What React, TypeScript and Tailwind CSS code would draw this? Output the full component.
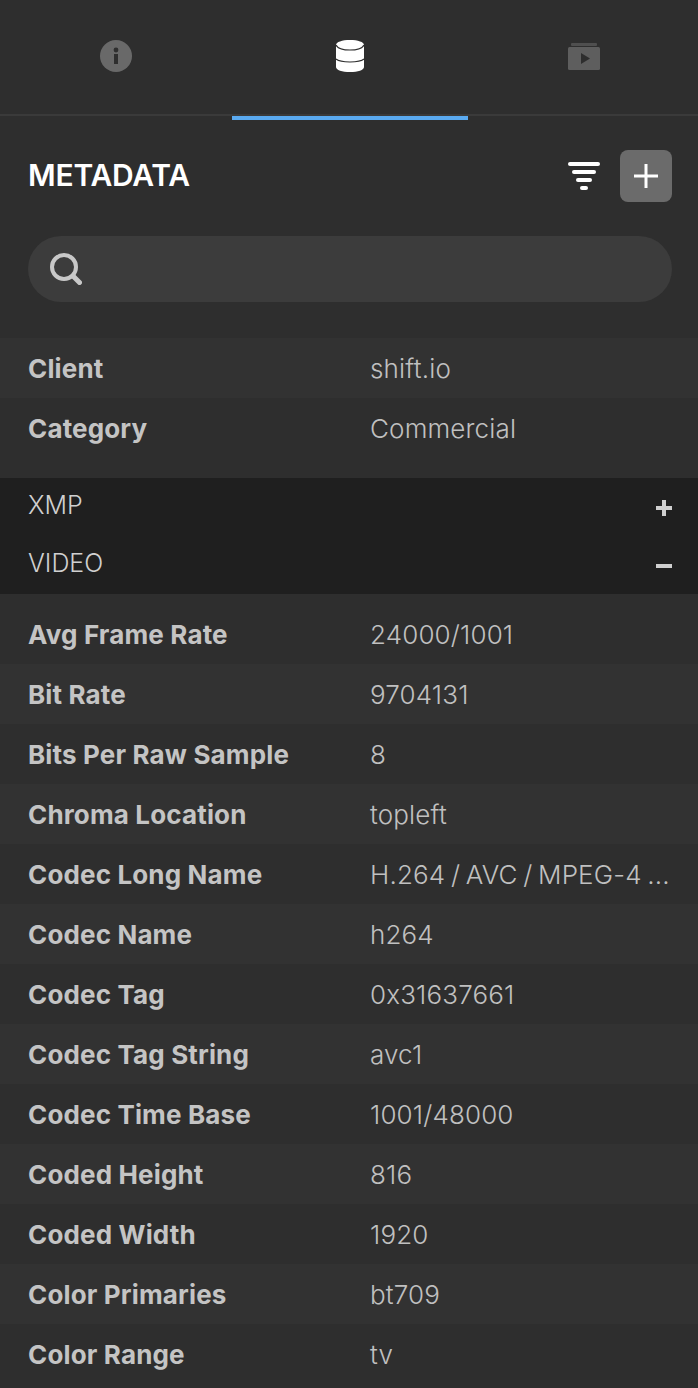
import React from 'react';

const topRows = [
  ['Client', 'shift.io'],
  ['Category', 'Commercial'],
];

const videoRows = [
  ['Avg Frame Rate', '24000/1001'],
  ['Bit Rate', '9704131'],
  ['Bits Per Raw Sample', '8'],
  ['Chroma Location', 'topleft'],
  ['Codec Long Name', 'H.264 / AVC / MPEG-4 ...'],
  ['Codec Name', 'h264'],
  ['Codec Tag', '0x31637661'],
  ['Codec Tag String', 'avc1'],
  ['Codec Time Base', '1001/48000'],
  ['Coded Height', '816'],
  ['Coded Width', '1920'],
  ['Color Primaries', 'bt709'],
  ['Color Range', 'tv'],
];

function InfoIcon() {
  return (
    <svg width="32" height="32" viewBox="0 0 32 32">
      <circle cx="16" cy="16" r="16" fill="#696969" />
      <circle cx="16" cy="10" r="2.4" fill="#2e2e2e" />
      <rect x="14" y="14" width="4" height="10" fill="#2e2e2e" />
    </svg>
  );
}

function DatabaseIcon() {
  return (
    <svg width="28" height="32" viewBox="0 0 28 32">
      <path d="M0 5C0 2 6 0 14 0s14 2 14 5v22c0 3-6 5-14 5S0 30 0 27Z" fill="#fff" />
      <path d="M0 5C2 9 8 10 14 10s12-1 14-5M0 19C2 21 8 22 14 22s12-1 14-3" fill="none" stroke="#2e2e2e" strokeWidth="1.2" />
    </svg>
  );
}

function VideoIcon() {
  return (
    <svg width="32" height="27" viewBox="0 0 32 27">
      <rect x="3" y="0" width="26" height="3" rx="1" fill="#4f4f4f" />
      <rect x="0" y="4" width="32" height="23" rx="1.500" fill="#5e5e5e" />
      <path d="M13 10 22 15.500 13 21Z" fill="#2e2e2e" />
    </svg>
  );
}

function FilterIcon() {
  return (
    <svg width="32" height="28" viewBox="0 0 32 28" fill="#fff">
      <rect x="0" y="0" width="32" height="4" rx="2" />
      <rect x="4" y="8" width="24" height="4" rx="2" />
      <rect x="8" y="16" width="16" height="4" rx="2" />
      <rect x="12" y="24" width="8" height="4" rx="2" />
    </svg>
  );
}

function SearchIcon() {
  return (
    <svg width="32" height="32" viewBox="0 0 32 32" fill="none" stroke="#c8c8c8">
      <circle cx="14" cy="14" r="12" strokeWidth="4" />
      <path d="M23 23 29.500 29.500" strokeWidth="5" strokeLinecap="round" />
    </svg>
  );
}

function Row({ label, value, odd }: { label: string; value: string; odd: boolean }) {
  return (
    <div className={`flex h-[60px] items-center pl-7 pr-[26px] text-[26px] tracking-[0.15px] ${odd ? 'bg-[#323232]' : 'bg-[#2e2e2e]'}`}>
      <div className="w-[342px] shrink-0 font-bold text-[#c4c4c4]">{label}</div>
      <div className="min-w-0 flex-1 whitespace-nowrap font-light text-[#c0c0c0] [word-spacing:-1.800px]">{value}</div>
    </div>
  );
}

function Section({ name, open }: { name: string; open: boolean }) {
  return (
    <div className="flex h-[58px] items-center justify-between pl-7 pr-[26px] text-[25px] font-light text-[#d0d0d0]">
      <span className="-mt-[3px]">{name}</span>
      <svg width="16" height="16" viewBox="0 0 16 16" fill="#cfcfcf" className="mt-[2px]">
        <rect x="0" y="6" width="16" height="4" />
        {!open && <rect x="6" y="0" width="4" height="16" />}
      </svg>
    </div>
  );
}

export default function App() {
  return (
    <div className="h-[1388px] w-full overflow-hidden bg-[#2e2e2e] font-['Inter',sans-serif]">
      <div className="flex h-[114px]">
        <div className="flex w-[232px] items-center justify-center pb-[2px]"><InfoIcon /></div>
        <div className="flex w-[236px] items-center justify-center pb-[2px]"><DatabaseIcon /></div>
        <div className="flex flex-1 items-center justify-center pl-[2px] pb-[2px]"><VideoIcon /></div>
      </div>
      <div className="h-[2px] bg-[#3a3a3a]" />
      <div className="ml-[232px] h-1 w-[236px] bg-[#5aaaf0]" />

      <div className="mt-[30px] flex h-[52px] items-center pl-7 pr-[26px]">
        <h1 className="-mt-[1px] flex-1 text-[30px] font-semibold tracking-[-0.2px] text-white">METADATA</h1>
        <FilterIcon />
        <button className="ml-5 flex h-[52px] w-[52px] items-center justify-center rounded-lg bg-[#6b6b6b]">
          <svg width="24" height="24" viewBox="0 0 24 24" fill="#fff">
            <rect x="0" y="10.500" width="24" height="3" />
            <rect x="10.500" y="0" width="3" height="24" />
          </svg>
        </button>
      </div>

      <div className="ml-7 mr-[26px] mt-[34px] flex h-[66px] items-center rounded-full bg-[#3c3c3c] pl-[22px]">
        <SearchIcon />
      </div>

      <div className="mt-9">
        {topRows.map(([label, value], i) => (
          <Row key={label} label={label} value={value} odd={i % 2 === 0} />
        ))}
      </div>

      <div className="mt-5 bg-[#1f1f1f]">
        <Section name="XMP" open={false} />
        <Section name="VIDEO" open={true} />
      </div>

      <div className="mt-[10px]">
        {videoRows.map(([label, value], i) => (
          <Row key={label} label={label} value={value} odd={i % 2 === 1} />
        ))}
      </div>
    </div>
  );
}
